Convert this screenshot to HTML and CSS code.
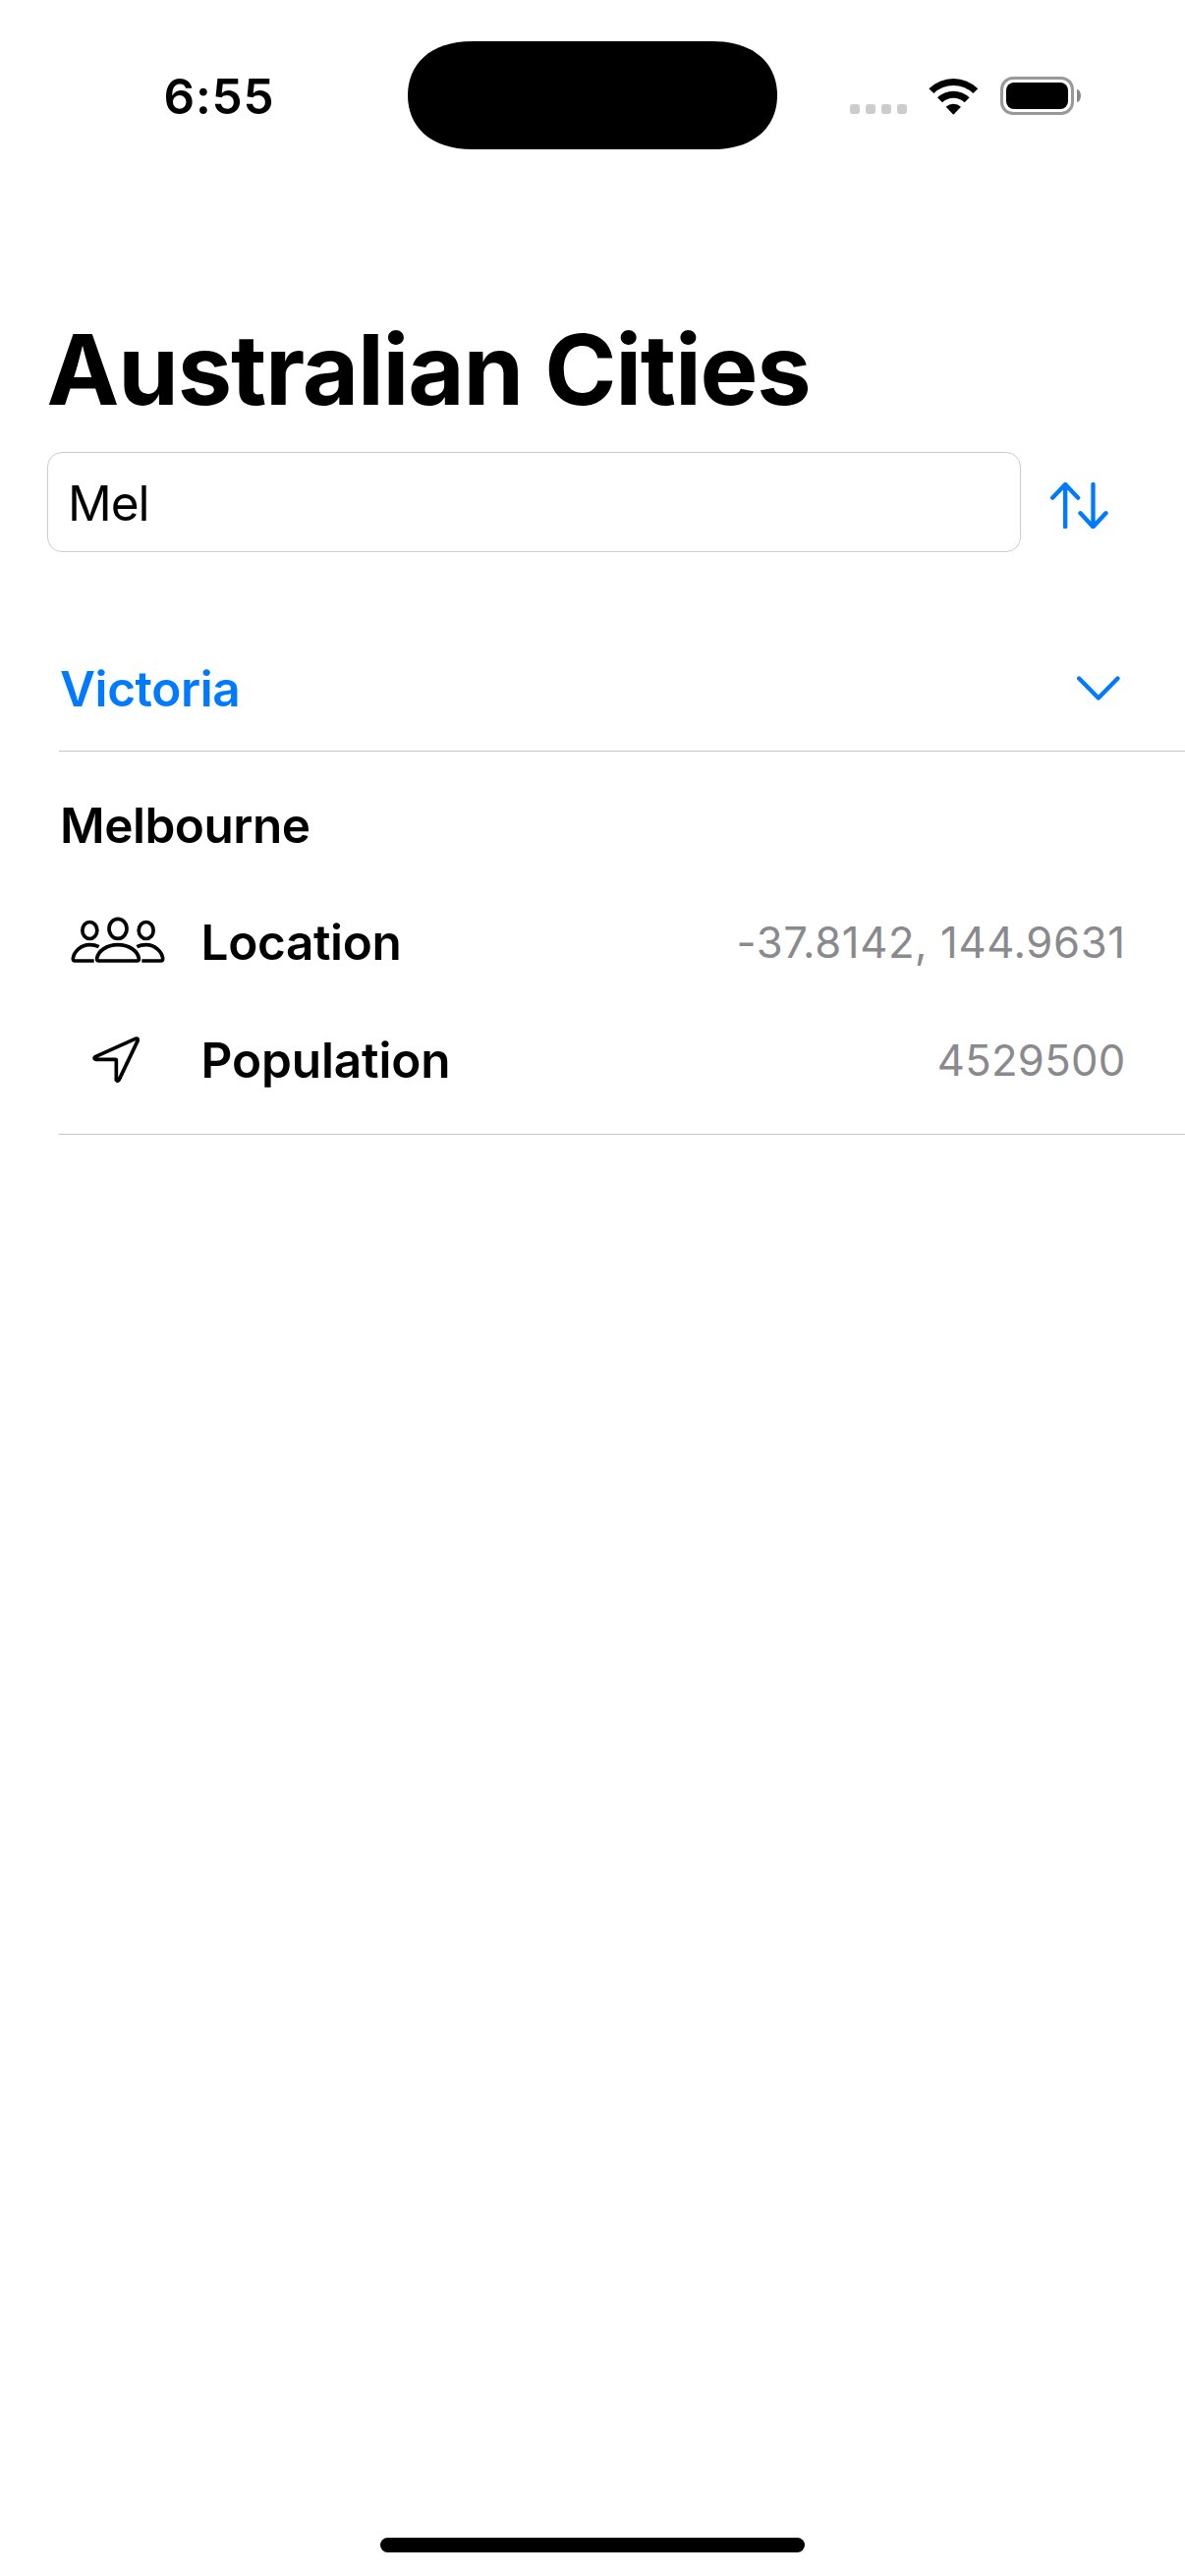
FILE: index.html
```html
<!DOCTYPE html>
<html lang="en">
<head>
<meta charset="utf-8">
<title>Australian Cities</title>
<link rel="stylesheet" href="styles.css">
</head>
<body>
<div class="screen">
  <header class="status-bar">
    <div class="time">6:55</div>
    <svg class="island" viewBox="0 0 376 110"><path d="M66 0H310C354 0 376 24 376 55S354 110 310 110H66C22 110 0 86 0 55S22 0 66 0Z"/></svg>
    <div class="indicators">
      <div class="signal"><i></i><i></i><i></i><i></i></div>
      <svg class="wifi" viewBox="0 0 152 114">
        <path d="M1 34A107 107 0 0 1 151 34L136 48A87 87 0 0 0 16 48Z"/>
        <path d="M27 61A70 70 0 0 1 125 61L110 76A49 49 0 0 0 42 76Z"/>
        <path d="M53 89A34 34 0 0 1 99 89L76 113Z"/>
      </svg>
      <div class="battery"><div class="battery-case"><div class="battery-level"></div></div><div class="battery-tip"></div></div>
    </div>
  </header>

  <main>
    <h1 class="title">Australian Cities</h1>
    <div class="search-row">
      <input class="search" type="text" value="Mel" aria-label="Search">
      <svg class="sort" viewBox="0 0 176 142"><path d="M45.500 136V6M6.500 47L45.500 6L84.500 47M130.500 6V136M91.500 94L130.500 136L169.500 94"/></svg>
    </div>

    <section class="list">
      <div class="section-header">
        <h2>Victoria</h2>
        <svg class="chevron" viewBox="0 0 131 75"><path d="M6.500 7.500L65.500 67.500L124.500 7.500"/></svg>
      </div>
      <article class="city">
        <h3>Melbourne</h3>
        <div class="detail">
          <div class="detail-icon">
            <svg class="people" viewBox="0 0 288 144">
              <ellipse cx="58" cy="42" rx="22.500" ry="25.500"/>
              <ellipse cx="230" cy="42" rx="22.500" ry="25.500"/>
              <ellipse cx="144" cy="37" rx="27" ry="30"/>
              <path d="M85 135H203Q209 135 208 127C204 106 180 86 144 86S84 106 80 127Q79 135 85 135Z"/>
              <path d="M71 135H13Q6 135 7 127C10 108 30 86 58 86Q74 86 86 92"/>
              <path d="M217 135H275Q282 135 281 127C278 108 258 86 230 86Q214 86 202 92"/>
            </svg>
          </div>
          <span class="label location">Location</span>
          <span class="value coords">-37.8142, 144.9631</span>
        </div>
        <div class="detail">
          <div class="detail-icon">
            <svg class="arrow" viewBox="0 0 144 144"><path d="M9 62L131 7Q141 4 138 14L81 133Q77 139 73 133V73Q73 70 70 70H10Q3 67 9 62Z"/></svg>
          </div>
          <span class="label">Population</span>
          <span class="value">4529500</span>
        </div>
      </article>
    </section>
  </main>
  <div class="home-indicator"></div>
</div>
</body>
</html>
```
FILE: styles.css
```css
* { box-sizing: border-box; }

body {
  margin: 0;
  background: #fff;
  color: #000;
  font-family: Inter, "Liberation Sans", sans-serif;
}

h1, h2, h3 { margin: 0; }

svg { display: block; flex: none; }

.screen {
  display: flex;
  flex-direction: column;
  width: 1206px;
  height: 2622px;
  overflow: hidden;
}

/* Status bar */
.status-bar {
  display: grid;
  grid-template-columns: 415px 376px 1fr;
  height: 316px;
  padding-top: 42px;
  align-items: start;
}

.time {
  padding: 1px 0 0 166.500px;
  font-size: 49.500px;
  font-weight: 600;
  line-height: 110px;
  letter-spacing: 0.800px;
}

.island { width: 376px; height: 110px; }

.indicators {
  display: flex;
  align-items: center;
  padding: 36px 0 0 74px;
}

.signal { display: flex; gap: 6px; margin-top: 27px; }
.signal i { width: 10px; height: 10px; border-radius: 3px; background: #ccc; }

.wifi { width: 50.670px; height: 38px; margin: 0 22px; }

.battery { display: flex; align-items: center; gap: 3px; }
.battery-case {
  width: 75px;
  height: 39px;
  padding: 3px;
  border: 3px solid #999;
  border-radius: 13px;
}
.battery-level { height: 27px; border-radius: 8px; background: #000; }
.battery-tip { width: 4px; height: 13px; border-radius: 0 4px 4px 0 / 0 6.500px 6.500px 0; background: #888; }

/* Title and search */
.title {
  padding-left: 47.500px;
  font-size: 99px;
  font-weight: 700;
  line-height: 120px;
  letter-spacing: -1.200px;
}

.search-row {
  display: flex;
  align-items: center;
  gap: 30px;
  margin-top: 24px;
  padding-left: 48px;
}

.search {
  width: 991px;
  height: 102px;
  padding: 2px 20px 0;
  border: 1px solid #ccc;
  border-radius: 15px;
  outline: none;
  background: #fff;
  color: #000;
  font: 400 49.500px Inter, "Liberation Sans", sans-serif;
  letter-spacing: -1px;
}

.sort, .chevron {
  fill: none;
  stroke: #007aff;
  stroke-width: 13;
  stroke-linecap: round;
  stroke-linejoin: round;
}
.sort { width: 58.670px; height: 47.330px; margin-top: 7px; }
.chevron { width: 43.670px; height: 25px; margin-top: -1px; }

/* City list */
.list { margin-top: 76px; padding-left: 60px; font-size: 49.500px; }

.section-header {
  display: flex;
  align-items: center;
  justify-content: space-between;
  height: 127px;
  padding-right: 66.500px;
  padding-left: 1px;
  border-bottom: 1px solid #c6c6c8;
  color: #007aff;
}

.section-header h2 {
  font-size: 49.500px;
  font-weight: 600;
  line-height: 60px;
  letter-spacing: -0.400px;
}

.city {
  display: grid;
  gap: 60px;
  padding: 45px 0;
  border-bottom: 1px solid #c6c6c8;
}

.city h3 {
  height: 59px;
  padding-left: 1px;
  font-size: 49.500px;
  font-weight: 600;
  line-height: 60px;
  letter-spacing: -0.480px;
}

.detail {
  display: grid;
  grid-template-columns: 119px 1fr auto;
  column-gap: 25.500px;
  align-items: center;
  height: 60px;
  padding-right: 60.500px;
  line-height: 60px;
}

.detail-icon { display: flex; justify-content: center; }

.label { font-weight: 600; letter-spacing: -0.120px; }
.location { letter-spacing: -0.350px; }
.value { padding-top: 2px; color: #8a8a8e; font-size: 43.600px; line-height: 58px; letter-spacing: 0.280px; }
.coords { letter-spacing: 0.600px; }

.people, .arrow {
  fill: none;
  stroke: #000;
  stroke-width: 11;
  stroke-linejoin: round;
}
.people { width: 96px; height: 48px; margin-top: -4px; }
.arrow { width: 48px; height: 48px; margin: -1px 3px 0 0; }

.home-indicator {
  width: 432px;
  height: 15px;
  margin: auto auto 24px;
  border-radius: 8px;
  background: #000;
}
```
